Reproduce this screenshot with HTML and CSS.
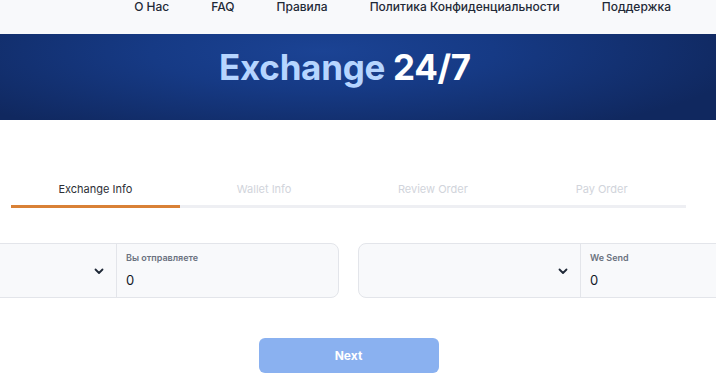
FILE: index.html
```html
<!DOCTYPE html>
<html lang="ru">
<head>
<meta charset="utf-8">
<link rel="stylesheet" href="styles.css">
</head>
<body>
<header class="topbar">
  <nav class="nav">
    <a>О Нас</a>
    <a>FAQ</a>
    <a>Правила</a>
    <a>Политика Конфиденциальности</a>
    <a>Поддержка</a>
  </nav>
</header>
<section class="hero">
  <h1 class="hero-title"><span class="accent">Exchange</span> 24/7</h1>
</section>
<main class="main">
  <div class="steps">
    <div class="step active"><span>Exchange Info</span></div>
    <div class="step"><span>Wallet Info</span></div>
    <div class="step"><span>Review Order</span></div>
    <div class="step"><span>Pay Order</span></div>
  </div>
  <div class="form-row">
    <div class="field">
      <div class="select">
        <svg class="chev" width="10" height="7" viewBox="0 0 10 7"><path d="M1.5 1.5 L5 5 L8.5 1.5" fill="none" stroke="#1f2937" stroke-width="1.8" stroke-linecap="round" stroke-linejoin="round"/></svg>
      </div>
      <div class="amount">
        <div class="label">Вы отправляете</div>
        <div class="value">0</div>
      </div>
    </div>
    <div class="field">
      <div class="select">
        <svg class="chev" width="10" height="7" viewBox="0 0 10 7"><path d="M1.5 1.5 L5 5 L8.5 1.5" fill="none" stroke="#1f2937" stroke-width="1.8" stroke-linecap="round" stroke-linejoin="round"/></svg>
      </div>
      <div class="amount">
        <div class="label">We Send</div>
        <div class="value">0</div>
      </div>
    </div>
  </div>
  <div class="actions">
    <button class="next">Next</button>
  </div>
</main>
</body>
</html>
```
FILE: styles.css
```css
* { box-sizing: border-box; }
html, body { margin: 0; padding: 0; }
body {
  font-family: Inter, "Noto Sans", sans-serif;
  background: #ffffff;
  overflow: hidden;
  width: 716px;
  height: 392px;
}
.topbar {
  height: 34px;
  background: #f8f9fb;
}
.nav {
  display: flex;
  justify-content: flex-end;
  gap: 42px;
  padding-right: 45px;
  font-size: 12px;
  line-height: 14px;
  font-weight: 500;
  color: #1f2937;
}
.hero {
  height: 86px;
  background: radial-gradient(ellipse 60% 110% at 45% 20%, #1b4394 0%, #163a85 40%, #10285f 100%);
  display: flex;
  justify-content: center;
  padding: 11px 0 0 0;
}
.hero-title {
  margin: 0;
  font-size: 35px;
  line-height: 44px;
  font-weight: 700;
  color: #ffffff;
  letter-spacing: -0.3px;
  padding-right: 26px;
}
.accent { color: #b6d5ff; }
.main {
  width: 697px;
  display: flex;
  flex-direction: column;
  align-items: center;
  padding-top: 62px;
}
.steps {
  width: 675px;
  display: grid;
  grid-template-columns: repeat(4, 1fr);
}
.step {
  text-align: center;
  font-size: 11px;
  line-height: 14px;
  color: #d1d4db;
  padding-bottom: 9px;
  border-bottom: 3px solid #eeeff3;
}
.step.active {
  color: #2d2f36;
  border-bottom-color: #d98136;
}
.form-row {
  width: 909px;
  flex: none;
  display: flex;
  gap: 19px;
  margin-top: 35px;
}
.field {
  flex: 1;
  height: 55px;
  display: flex;
  background: #f8f9fb;
  border: 1px solid #e3e5ea;
  border-radius: 8px;
}
.select {
  width: 222px;
  border-right: 1px solid #e3e5ea;
  display: flex;
  align-items: center;
  justify-content: flex-end;
  padding-right: 12px;
}
.chev { display: block; margin-top: 1px; }
.amount {
  flex: 1;
  padding: 8px 9px;
}
.label {
  font-size: 9px;
  line-height: 12px;
  font-weight: 600;
  color: #6b7280;
}
.value {
  margin-top: 8px;
  font-size: 13px;
  line-height: 16px;
  color: #111827;
}
.actions {
  margin-top: 40px;
}
.next {
  width: 180px;
  height: 35px;
  border: none;
  border-radius: 6px;
  background: #8ab1f0;
  color: #ffffff;
  font-family: Inter, sans-serif;
  font-size: 12px;
  font-weight: 700;
}
```
